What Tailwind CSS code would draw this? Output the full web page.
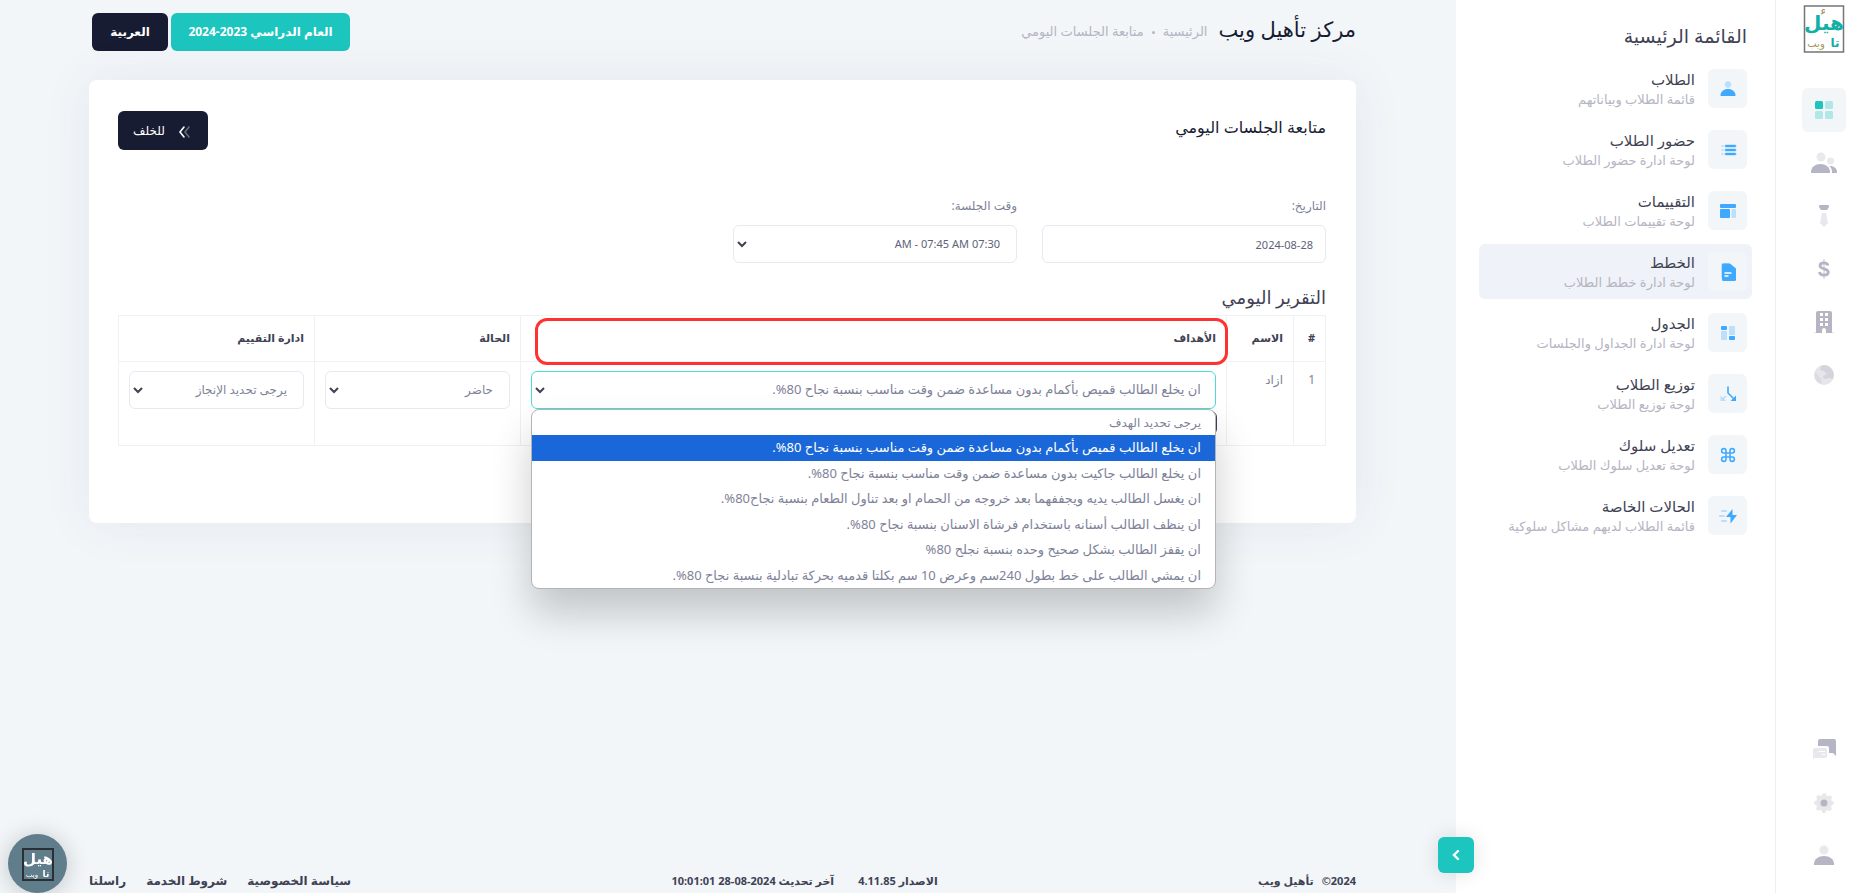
<!DOCTYPE html>
<html lang="ar" dir="rtl">
<head>
    <meta charset="UTF-8">
    <title>مركز تأهيل ويب</title>
    <script src="https://cdn.jsdelivr.net/npm/@tailwindcss/browser@4"></script>
</head>
<body class="flex min-h-screen bg-[#f2f6f9] font-['Noto_Sans','DejaVu_Sans',sans-serif] text-[12px] text-[#7e8299]">

<!-- icon bar -->
<aside class="flex w-[97px] shrink-0 flex-col items-center border-l border-[#eceef2] bg-white pt-1 pb-[15px] text-[#b5b5c3]">
    <a href="#" aria-label="تأهيل ويب">
        <svg class="h-[50px] w-[46px]" viewBox="0 0 46 50" font-family="DejaVu Sans">
            <rect x="3.500" y="2" width="39" height="46" fill="none" stroke="#757575" stroke-width="1.500"/>
            <text x="23" y="26" font-size="20" font-weight="bold" fill="#12afa7" text-anchor="middle">هيل</text>
            <text x="34" y="43" font-size="12" font-weight="bold" fill="#12afa7" text-anchor="middle">تا</text>
            <text x="15" y="43" font-size="10" fill="#a8935c" text-anchor="middle">ويب</text>
            <path d="M24 6q-3-1-3 1t3 1l-4 2" fill="none" stroke="#a8935c" stroke-width="1.200"/>
        </svg>
    </a>
    <nav class="mt-[34px] flex flex-col gap-[9px]">
        <button class="flex size-11 items-center justify-center rounded-md bg-[#f2f6f9]" aria-label="الرئيسية">
            <svg class="size-5" viewBox="0 0 20 20" fill="#1cc5be">
                <rect x="1" y="1" width="8" height="8" rx="1.500"/>
                <rect x="11" y="1" width="8" height="8" rx="1.500" opacity=".3"/>
                <rect x="1" y="11" width="8" height="8" rx="1.500" opacity=".3"/>
                <rect x="11" y="11" width="8" height="8" rx="1.500" opacity=".3"/>
            </svg>
        </button>
        <button class="flex size-11 items-center justify-center" aria-label="المستخدمون">
            <svg class="h-6 w-7" viewBox="0 0 28 24" fill="currentColor">
                <circle cx="11" cy="6" r="4.500" opacity=".3"/>
                <circle cx="20.500" cy="10" r="3.500" opacity=".3"/>
                <path d="M1 22v-1c0-5 4.500-8 9.500-8s9.500 3 9.500 8v1z"/>
                <path d="M20 15c4 0 7 2.500 7 6v1h-5v-1c0-2.500-.8-4.500-2.500-6z"/>
            </svg>
        </button>
        <button class="flex size-11 items-center justify-center" aria-label="الموظفون">
            <svg class="size-6" viewBox="0 0 24 24" fill="currentColor">
                <path d="M7 2q0-1 1-1h8q1 0 1 1v1l-2 3H9L7 3z"/>
                <path d="M10 9h4l2 10-4 4-4-4z" opacity=".3"/>
            </svg>
        </button>
        <button class="flex size-11 items-center justify-center" aria-label="المالية">
            <svg class="size-6" viewBox="0 0 24 24" fill="none" stroke="currentColor">
                <path d="M12 2v20" stroke-width="2" opacity=".4"/>
                <path d="M16 8.500c-.5-1.800-1.800-2.700-4-2.700-2.300 0-4 1.100-4 2.900 0 3.900 8.300 2.300 8.300 6.400 0 2-1.700 3.100-4.300 3.100-2.500 0-4.200-1.100-4.600-3.100" stroke-width="2.800"/>
            </svg>
        </button>
        <button class="flex size-11 items-center justify-center" aria-label="المبنى">
            <svg class="size-6" viewBox="0 0 24 24" fill="currentColor">
                <path fill-rule="evenodd" d="M4 3q0-2 2-2h12q2 0 2 2v20h-6v-3a2 2 0 0 0-4 0v3H4zM8 3v3h3V3zm5 0v3h3V3zM8 8v3h3V8zm5 0v3h3V8zm-5 5v3h3v-3zm5 0v3h3v-3z"/>
                <path d="M2 22h8v1H2zm12 0h8v1h-8z" opacity=".4"/>
            </svg>
        </button>
        <button class="flex size-11 items-center justify-center" aria-label="الموقع">
            <svg class="size-6" viewBox="0 0 24 24" fill="currentColor">
                <circle cx="12" cy="12" r="10" opacity=".35"/>
                <path d="M12 2a10 10 0 0 1 9 14l-4-1-5 1-1-3 4-2-3-3-4-1 1-4z" opacity=".35"/>
                <path d="M2.500 10c2 0 4 2 4.500 4l3 3-1 4A10 10 0 0 1 2.500 10z" opacity=".2"/>
            </svg>
        </button>
    </nav>
    <div class="mt-auto flex flex-col gap-[9px]">
        <button class="flex size-11 items-center justify-center" aria-label="الرسائل">
            <svg class="size-6" viewBox="0 0 24 24" fill="currentColor">
                <path d="M6 3q0-2 2-2h14q2 0 2 2v15l-3-3h-4v-5q0-2-2-2H6z"/>
                <path fill-rule="evenodd" d="M1 12q0-2 2-2h10q2 0 2 2v6q0 2-2 2H3l-2 1zM7 13v1h6v-1zm3 3v1h3v-1z" opacity=".3"/>
            </svg>
        </button>
        <button class="flex size-11 items-center justify-center" aria-label="الاعدادات">
            <svg class="size-6" viewBox="0 0 24 24" fill="currentColor">
                <g opacity=".3">
                    <circle cx="12" cy="12" r="8"/>
                    <circle cx="12" cy="12" r="8" fill="none" stroke="currentColor" stroke-width="4" stroke-linecap="round" stroke-dasharray="0.100 6.183"/>
                </g>
                <circle cx="12" cy="12" r="3.500"/>
            </svg>
        </button>
        <button class="flex size-11 items-center justify-center" aria-label="الحساب">
            <svg class="size-6" viewBox="0 0 24 24" fill="currentColor">
                <circle cx="12" cy="6" r="4.500" opacity=".3"/>
                <path d="M2 21v-1c0-5 4.500-8 10-8s10 3 10 8v1z"/>
            </svg>
        </button>
    </div>
</aside>

<!-- main menu -->
<aside class="relative w-[319px] shrink-0 bg-white px-[23px] pt-5">
    <h2 class="mr-[5px] h-8 text-[19px] leading-8 text-[#3f4254]">القائمة الرئيسية</h2>
    <nav class="mt-[9px] flex flex-col gap-[6px]">
        <a href="#" class="flex h-[55px] items-center gap-[13px] rounded-md px-[5px]">
            <span class="flex size-[39px] items-center justify-center rounded-md bg-[#f2f6f9] text-[#3fa9ff]">
                <svg class="size-5" viewBox="0 0 20 20" fill="currentColor">
                    <circle cx="10" cy="5.500" r="3.200" opacity=".3"/>
                    <path d="M2.500 17v-.5c0-4 3.500-6.500 7.500-6.500s7.500 2.500 7.500 6.500v.5z"/>
                </svg>
            </span>
            <span class="flex flex-col">
                <span class="text-[15px] leading-5 text-[#3f4254]">الطلاب</span>
                <span class="text-[13px] leading-5 text-[#b5b5c3]">قائمة الطلاب وبياناتهم</span>
            </span>
        </a>
        <a href="#" class="flex h-[55px] items-center gap-[13px] rounded-md px-[5px]">
            <span class="flex size-[39px] items-center justify-center rounded-md bg-[#f2f6f9] text-[#3fa9ff]">
                <svg class="size-5" viewBox="0 0 20 20" fill="currentColor">
                    <path d="M8 4.500h9a1 1 0 0 1 0 3H8a1 1 0 0 1 0-3zm0 4h9a1 1 0 0 1 0 3H8a1 1 0 0 1 0-3zm0 4h9a1 1 0 0 1 0 3H8a1 1 0 0 1 0-3z" stroke="#f2f6f9" stroke-width=".6"/>
                    <path d="M3.500 5h2v2h-2zm0 4h2v2h-2zm0 4h2v2h-2z" opacity=".3"/>
                </svg>
            </span>
            <span class="flex flex-col">
                <span class="text-[15px] leading-5 text-[#3f4254]">حضور الطلاب</span>
                <span class="text-[13px] leading-5 text-[#b5b5c3]">لوحة ادارة حضور الطلاب</span>
            </span>
        </a>
        <a href="#" class="flex h-[55px] items-center gap-[13px] rounded-md px-[5px]">
            <span class="flex size-[39px] items-center justify-center rounded-md bg-[#f2f6f9] text-[#3fa9ff]">
                <svg class="size-5" viewBox="0 0 20 20" fill="currentColor">
                    <rect x="2" y="3" width="16" height="4" rx="1"/>
                    <rect x="2" y="8" width="10" height="9" rx="1"/>
                    <rect x="13.500" y="8" width="4.500" height="9" rx="1" opacity=".3"/>
                </svg>
            </span>
            <span class="flex flex-col">
                <span class="text-[15px] leading-5 text-[#3f4254]">التقييمات</span>
                <span class="text-[13px] leading-5 text-[#b5b5c3]">لوحة تقييمات الطلاب</span>
            </span>
        </a>
        <a href="#" class="flex h-[55px] items-center gap-[13px] rounded-md bg-[#eff2f8] px-[5px]">
            <span class="flex size-[39px] items-center justify-center rounded-md bg-[#f2f6f9] text-[#3fa9ff]">
                <svg class="size-5" viewBox="0 0 20 20">
                    <path d="M3 3q0-2 2-2h6L5 17q-2 0-2-2z" fill="currentColor" opacity=".3"/>
                    <path d="M4 3q0-1.500 1.500-1.500h6.500l6 5v11q0 1.500-1.500 1.500h-11Q4 19 4 17.500z" fill="currentColor"/>
                    <path d="M7 11h6M7 14h3" stroke="#fff" stroke-width="1.400" stroke-linecap="round"/>
                </svg>
            </span>
            <span class="flex flex-col">
                <span class="text-[15px] leading-5 text-[#3f4254]">الخطط</span>
                <span class="text-[13px] leading-5 text-[#b5b5c3]">لوحة ادارة خطط الطلاب</span>
            </span>
        </a>
        <a href="#" class="flex h-[55px] items-center gap-[13px] rounded-md px-[5px]">
            <span class="flex size-[39px] items-center justify-center rounded-md bg-[#f2f6f9] text-[#3fa9ff]">
                <svg class="size-5" viewBox="0 0 20 20" fill="currentColor">
                    <rect x="3" y="3" width="6" height="4" rx="1"/>
                    <rect x="11" y="13" width="6" height="4" rx="1"/>
                    <rect x="3" y="8" width="6" height="9" rx="1" opacity=".3"/>
                    <rect x="11" y="3" width="6" height="9" rx="1" opacity=".3"/>
                </svg>
            </span>
            <span class="flex flex-col">
                <span class="text-[15px] leading-5 text-[#3f4254]">الجدول</span>
                <span class="text-[13px] leading-5 text-[#b5b5c3]">لوحة ادارة الجداول والجلسات</span>
            </span>
        </a>
        <a href="#" class="flex h-[55px] items-center gap-[13px] rounded-md px-[5px]">
            <span class="flex size-[39px] items-center justify-center rounded-md bg-[#f2f6f9] text-[#3fa9ff]">
                <svg class="size-5" viewBox="0 0 20 20">
                    <path d="M10 3v6l5 5" fill="none" stroke="currentColor" stroke-width="1.600" stroke-linecap="round"/>
                    <path d="M18 11.500V17h-5.500z" fill="currentColor"/>
                    <path d="M8 12l-3 3" stroke="currentColor" stroke-width="1.600" opacity=".3"/>
                    <path d="M2.500 11.500V17H8z" fill="currentColor" opacity=".3"/>
                </svg>
            </span>
            <span class="flex flex-col">
                <span class="text-[15px] leading-5 text-[#3f4254]">توزيع الطلاب</span>
                <span class="text-[13px] leading-5 text-[#b5b5c3]">لوحة توزيع الطلاب</span>
            </span>
        </a>
        <a href="#" class="flex h-[55px] items-center gap-[13px] rounded-md px-[5px]">
            <span class="flex size-[39px] items-center justify-center rounded-md bg-[#f2f6f9] text-[#3fa9ff]">
                <svg class="size-5" viewBox="0 0 20 20" fill="none" stroke="currentColor" stroke-width="1.600">
                    <path d="M8 8V5.700A2.200 2.200 0 1 0 5.700 8h8.600A2.200 2.200 0 1 0 12 5.700v8.600a2.200 2.200 0 1 0 2.300-2.300H5.700A2.200 2.200 0 1 0 8 14.300z"/>
                </svg>
            </span>
            <span class="flex flex-col">
                <span class="text-[15px] leading-5 text-[#3f4254]">تعديل سلوك</span>
                <span class="text-[13px] leading-5 text-[#b5b5c3]">لوحة تعديل سلوك الطلاب</span>
            </span>
        </a>
        <a href="#" class="flex h-[55px] items-center gap-[13px] rounded-md px-[5px]">
            <span class="flex size-[39px] items-center justify-center rounded-md bg-[#f2f6f9] text-[#3fa9ff]">
                <svg class="size-5" viewBox="0 0 20 20">
                    <path d="M14.500 3v6H19l-6.500 8.500V11H8z" fill="currentColor"/>
                    <path d="M4 5h4M2 10h4M4 15h4" stroke="currentColor" stroke-width="2" stroke-linecap="round" opacity=".3"/>
                </svg>
            </span>
            <span class="flex flex-col">
                <span class="text-[15px] leading-5 text-[#3f4254]">الحالات الخاصة</span>
                <span class="text-[13px] leading-5 text-[#b5b5c3]">قائمة الطلاب لديهم مشاكل سلوكية</span>
            </span>
        </a>
    </nav>
    <button class="absolute bottom-5 -left-[18px] flex size-9 items-center justify-center rounded-md bg-[#1cc5be] shadow-[0_0_20px_rgba(0,0,0,0.12)]" aria-label="اخفاء القائمة">
        <svg class="size-3" viewBox="0 0 12 12" fill="none" stroke="#fff" stroke-width="2.400" stroke-linecap="round"><path d="M8 2L4 6l4 4"/></svg>
    </button>
</aside>

<div class="flex min-w-0 flex-1 flex-col pt-[13px] pr-[100px] pl-[89px]">
    <header class="flex h-[38px] items-center justify-between">
        <div class="flex items-center gap-[11px]">
            <h1 class="pb-1 text-[21px] text-[#181c32]">مركز تأهيل ويب</h1>
            <nav class="flex items-center gap-2 text-[13px] text-[#b5b5c3]">
                <a href="#">الرئيسية</a>
                <span class="size-[3px] rounded-full bg-[#b5b5c3]"></span>
                <span>متابعة الجلسات اليومي</span>
            </nav>
        </div>
        <div class="ml-[3px] flex gap-[3px] text-[12px] font-bold text-white">
            <button class="h-[38px] w-[179px] rounded-md bg-[#1cc5be]">العام الدراسي 2023-2024</button>
            <button class="h-[38px] w-[76px] rounded-md bg-[#181c32]">العربية</button>
        </div>
    </header>

    <main class="mt-[29px] rounded-lg bg-white pt-[31px] pr-[30px] pb-[77px] pl-[29px] shadow-[0_0_50px_rgba(82,63,105,0.08)]">
        <div class="flex h-[39px] items-center justify-between">
            <h3 class="pb-2 text-[16px] text-[#181c32]">متابعة الجلسات اليومي</h3>
            <button class="flex h-[39px] w-[90px] items-center justify-center gap-3 rounded-md bg-[#181c32] text-[12px] text-white">
                <svg class="size-4" viewBox="0 0 16 16" fill="none" stroke="#fff" stroke-width="1.600" stroke-linecap="round">
                    <path d="M7 4L3 9l4 5"/>
                    <path d="M12 4L8 9l4 5" opacity=".35"/>
                </svg>
                للخلف
            </button>
        </div>

        <div class="mt-[46px] flex gap-[25px]">
            <div class="flex w-[284px] flex-col gap-[9px]">
                <label for="date" class="h-5 text-[12px] leading-5">التاريخ:</label>
                <input id="date" type="text" value="2024-08-28" class="h-[38px] rounded-md border border-[#e8e8f0] px-3 text-[11px] text-[#5e6278]">
            </div>
            <div class="relative flex w-[284px] flex-col gap-[9px]">
                <label for="time" class="h-5 text-[12px] leading-5">وقت الجلسة:</label>
                <select id="time" class="h-[38px] appearance-none rounded-md border border-[#e8e8f0] px-4 text-[11px] text-[#5e6278]">
                    <option>07:30 AM - 07:45 AM</option>
                </select>
                <svg class="pointer-events-none absolute bottom-[14px] left-1 size-[10px]" viewBox="0 0 10 10" fill="none" stroke="#3f4254" stroke-width="2"><path d="M1 3l4 4 4-4"/></svg>
            </div>
        </div>

        <h2 class="mt-[18px] h-[34px] text-[18px] leading-8 text-[#3f4254]">التقرير اليومي</h2>
        <table class="w-full table-fixed border-collapse text-right [&_td]:border [&_td]:border-[#eff2f5] [&_td]:px-[10px] [&_td]:align-top [&_th]:border [&_th]:border-[#eff2f5] [&_th]:px-[10px]">
            <thead>
            <tr class="h-[46px] text-[11px] text-[#3f4254]">
                <th class="w-8">#</th>
                <th class="w-[67px]">الاسم</th>
                <th class="relative">
                    الأهداف
                    <span class="absolute -right-[2px] top-[2px] left-[14px] h-[47px] rounded-xl border-3 border-[#ff3232]"></span>
                </th>
                <th class="w-[206px]">الحالة</th>
                <th class="w-[196px]">ادارة التقييم</th>
            </tr>
            </thead>
            <tbody>
            <tr class="h-[84px] text-[12px]">
                <td class="pt-[9px]">1</td>
                <td class="pt-[9px]">ازاد</td>
                <td class="pt-[9px]">
                    <div class="relative text-[13px]">
                        <select aria-label="الأهداف" class="block h-[38px] w-full appearance-none rounded-md border border-[#4ddbd5] px-[14px]">
                            <option>ان يخلع الطالب قميص بأكمام بدون مساعدة ضمن وقت مناسب بنسبة نجاح 80%.</option>
                        </select>
                        <svg class="pointer-events-none absolute top-[14px] left-1 size-[10px]" viewBox="0 0 10 10" fill="none" stroke="#3f4254" stroke-width="2"><path d="M1 3l4 4 4-4"/></svg>
                        <button class="absolute top-10 -right-px h-6 w-10 rounded-md border border-[#3f4254]" aria-label="اضافة"></button>
                        <ul role="listbox" class="absolute inset-x-0 top-[38px] z-10 grid h-[180px] grid-rows-7 overflow-hidden rounded-lg border border-[#b4b4b4] bg-white shadow-[0_24px_40px_rgba(0,0,0,0.2)]">
                            <li role="option" class="flex items-center px-[14px] text-[12px]">يرجى تحديد الهدف</li>
                            <li role="option" aria-selected="true" class="flex items-center bg-[#1967d8] px-[14px] text-white">ان يخلع الطالب قميص بأكمام بدون مساعدة ضمن وقت مناسب بنسبة نجاح 80%.</li>
                            <li role="option" class="flex items-center px-[14px]">ان يخلع الطالب جاكيت بدون مساعدة ضمن وقت مناسب بنسبة نجاح 80%.</li>
                            <li role="option" class="flex items-center px-[14px]">ان يغسل الطالب يديه ويجففهما بعد خروجه من الحمام او بعد تناول الطعام بنسبة نجاح80%.</li>
                            <li role="option" class="flex items-center px-[14px]">ان ينظف الطالب أسنانه باستخدام فرشاة الاسنان بنسبة نجاح 80%.</li>
                            <li role="option" class="flex items-center px-[14px]">ان يقفز الطالب بشكل صحيح وحده بنسبة نجلح 80%</li>
                            <li role="option" class="flex items-center px-[14px]">ان يمشي الطالب على خط بطول 240سم وعرض 10 سم بكلتا قدميه بحركة تبادلية بنسبة نجاح 80%.</li>
                        </ul>
                    </div>
                </td>
                <td class="pt-[9px]">
                    <div class="relative">
                        <select aria-label="الحالة" class="block h-[38px] w-full appearance-none rounded-md border border-[#e8e8f0] px-4">
                            <option>حاضر</option>
                        </select>
                        <svg class="pointer-events-none absolute top-[14px] left-1 size-[10px]" viewBox="0 0 10 10" fill="none" stroke="#3f4254" stroke-width="2"><path d="M1 3l4 4 4-4"/></svg>
                    </div>
                </td>
                <td class="pt-[9px]">
                    <div class="relative">
                        <select aria-label="ادارة التقييم" class="block h-[38px] w-full appearance-none rounded-md border border-[#e8e8f0] px-4">
                            <option>يرجى تحديد الإنجاز</option>
                        </select>
                        <svg class="pointer-events-none absolute top-[14px] left-1 size-[10px]" viewBox="0 0 10 10" fill="none" stroke="#3f4254" stroke-width="2"><path d="M1 3l4 4 4-4"/></svg>
                    </div>
                </td>
            </tr>
            </tbody>
        </table>
    </main>

    <footer class="mt-auto flex h-6 items-center justify-between text-[11px] font-bold text-[#3f4254]">
        <div class="flex gap-2"><span>2024©</span><a href="#">تأهيل ويب</a></div>
        <div class="flex gap-6"><span>الاصدار 4.11.85</span><span>آخر تحديث 2024-08-28 10:01:01</span></div>
        <nav class="flex gap-5 text-[12px]">
            <a href="#">سياسة الخصوصية</a>
            <a href="#">شروط الخدمة</a>
            <a href="#">راسلنا</a>
        </nav>
    </footer>
</div>

<!-- chat bubble -->
<button class="fixed bottom-0 left-2 flex size-[59px] items-center justify-center rounded-full bg-[#607d8b] shadow-[0_2px_24px_rgba(0,0,0,0.2)]" aria-label="محادثة">
    <svg class="size-9" viewBox="0 0 36 36" font-family="DejaVu Sans" fill="#fff" text-anchor="middle">
        <rect x="3" y="3" width="30" height="31" fill="none" stroke="#2b2f33" stroke-width="2"/>
        <text x="18" y="18" font-size="15" font-weight="bold">هيل</text>
        <text x="26" y="31" font-size="9" font-weight="bold">تا</text>
        <text x="12" y="31" font-size="7">ويب</text>
    </svg>
</button>
</body>
</html>
